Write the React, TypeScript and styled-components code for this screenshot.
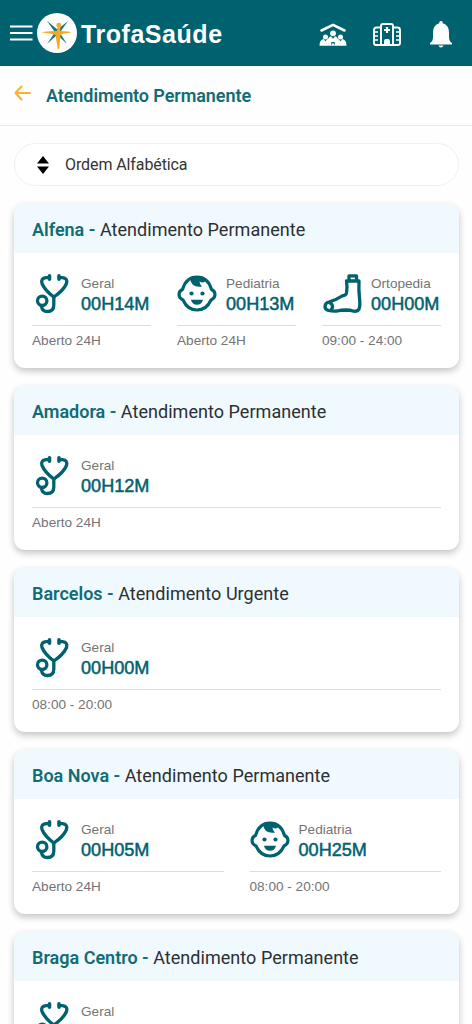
import React from "react";
import styled, { createGlobalStyle } from "styled-components";

const TEAL = "#00616f";

const GlobalStyle = createGlobalStyle`
  * { box-sizing: border-box; }
  body { margin: 0; background: #fefefe; font-family: Roboto, sans-serif; overflow: hidden; }
  svg { display: block; flex: none; }
`;

const Screen = styled.div`
  height: 1024px;
  overflow: hidden;
  background: #fefefe;
`;

const TopBar = styled.header`
  height: 66px;
  padding: 0 19px 0 10px;
  display: flex;
  align-items: center;
  background: ${TEAL};
  color: #fff;
`;

const Brand = styled.div`
  margin-left: 4px;
  display: flex;
  align-items: center;
  gap: 4px;
  font: 700 25px/30px "Liberation Sans", Arial, sans-serif;
  letter-spacing: 0.55px;
`;

const BrandName = styled.span`
  padding-top: 1px;
`;

const Actions = styled.nav`
  margin-left: auto;
  padding-top: 4px;
  display: flex;
  align-items: center;
  gap: 26px;

  svg:last-child {
    margin-left: 2px;
  }
`;

const PageHeader = styled.div`
  height: 60px;
  padding-left: 14px;
  display: flex;
  align-items: center;
  gap: 15px;
  border-bottom: 1px solid #e9e9e9;
`;

const BackArrow = styled.svg`
  margin-bottom: 6px;
`;

const PageTitle = styled.h1`
  margin: 0;
  font-size: 18px;
  line-height: 24px;
  font-weight: 600;
  letter-spacing: -0.08px;
  color: #126c75;
`;

const SortSelect = styled.button`
  width: 445px;
  height: 43px;
  margin: 17px 0 0 14px;
  padding: 0 0 0 22px;
  display: flex;
  align-items: center;
  gap: 16px;
  border: 1px solid #f0f0f0;
  border-radius: 22px;
  background: #fff;
  color: #333;
  font: 400 16px/20px Roboto, sans-serif;
  letter-spacing: -0.1px;
`;

const CardList = styled.main`
  padding: 18px 13px 0 14px;
  display: flex;
  flex-direction: column;
  gap: 18px;
`;

const Card = styled.section`
  height: 164px;
  flex: none;
  border-radius: 11px;
  background: #fff;
  box-shadow: 0 3px 7px rgba(0, 0, 0, 0.24);
`;

const CardHeader = styled.h2`
  margin: 0;
  height: 49px;
  padding: 0 18px;
  border-radius: 11px 11px 0 0;
  background: #f0f9fd;
  font-size: 18px;
  line-height: 51px;
  font-weight: 400;
  letter-spacing: 0.04px;
  color: #2c2f33;
`;

const Unit = styled.span`
  font-weight: 600;
  letter-spacing: 0;
  color: #126c75;
`;

const Services = styled.div`
  padding: 20px 18px 0;
  display: flex;
  gap: 26px;
`;

const ServiceBox = styled.div`
  flex: 1 1 0;
  min-width: 0;
  font-family: "Liberation Sans", Arial, sans-serif;
`;

const ServiceTop = styled.div`
  height: 53px;
  display: flex;
  gap: 9px;
  border-bottom: 1px solid #dedede;
`;

const ServiceName = styled.div`
  margin-top: 3px;
  font-size: 13.6px;
  line-height: 16px;
  color: #747474;
`;

const WaitTime = styled.div`
  margin-top: 2px;
  font-size: 18.1px;
  line-height: 20px;
  color: ${TEAL};
  -webkit-text-stroke: 0.5px ${TEAL};
`;

const Hours = styled.div`
  margin-top: 7px;
  font-size: 13.6px;
  line-height: 16px;
  color: #747474;
`;

function MenuIcon() {
  return (
    <svg width="23" height="18" viewBox="0 0 23 18" stroke="#fff" strokeWidth="2">
      <path d="M0 2.500h22.500M0 9h22.500M0 15.500h22.500" />
    </svg>
  );
}

function Logo() {
  return (
    <svg width="40" height="40" viewBox="0 0 40 40">
      <circle cx="20" cy="20" r="20" fill="#fff" />
      <g fill="#16777c">
        <path d="M10 8 21 17 18.500 20Z" />
        <path d="M31 8 22.500 20 19.500 17.500Z" />
        <path d="M10 31 18.500 18.500 21 21Z" />
        <path d="M30 31 19.500 21 22 18.500Z" />
      </g>
      <g fill="#f7a823">
        <path d="M4 19.300Q15 17.800 20.500 17.800T35 19.300Q25 20.600 23.500 22L22.200 36H20.800L18.500 22Q15 20.600 4 19.300Z" />
        <circle cx="21.800" cy="12.200" r="2.400" />
        <path d="M20 14.500h3.500L23 19h-3Z" />
      </g>
    </svg>
  );
}

function FamilyHomeIcon() {
  return (
    <svg width="28" height="24" viewBox="0 0 28 24" fill="#fff">
      <path d="M2.500 7.500 14 1.800l11.500 5.700" fill="none" stroke="#fff" strokeWidth="2.600" strokeLinecap="round" strokeLinejoin="round" />
      <circle cx="14" cy="10.300" r="2.900" />
      <circle cx="6.500" cy="14" r="2.500" />
      <circle cx="21.500" cy="14" r="2.500" />
      <path d="M8.800 18.500q0-5 3.200-5.300l2 2.600 2-2.600q3.200.3 3.200 5.300l-2.200.5h-6Z" />
      <path d="M.5 22.800q0-6 4.200-6.700l1.800 2.200 1.800-2.200q3 .3 4 3v3.700Z" />
      <path d="M27.500 22.800q0-6-4.200-6.700l-1.800 2.200-1.800-2.200q-3 .3-4 3v3.700Z" />
      <path d="m12 22.800 2-3 2 3Z" />
    </svg>
  );
}

function HospitalIcon() {
  return (
    <svg width="28" height="24" viewBox="0 0 28 24" fill="none" stroke="#fff" strokeWidth="1.900" strokeLinejoin="round">
      <path d="M8 22V3q0-2 2-2h8q2 0 2 2v19" />
      <path d="M8 4.500H3.500Q1 4.500 1 7v13q0 2 2 2h22q2 0 2-2V7q0-2.500-2.500-2.500H20" />
      <path d="M1 9h4M1 13h4M1 17h4M23 9h4M23 13h4M23 17h4" strokeWidth="1.700" />
      <path d="M14 4v6M11 7h6" strokeWidth="2.200" />
      <path d="M12 22v-4q0-1 1-1h2q1 0 1 1v4" fill="#fff" />
    </svg>
  );
}

function BellIcon() {
  return (
    <svg width="24" height="28" viewBox="0 0 24 28" fill="#fff">
      <path d="M12 0q1.800 0 1.800 2.300Q20 4 20 11.500V16q0 4.500 3 6v1.500H1V22q3-1.500 3-6v-4.500Q4 4 10.200 2.300 10.200 0 12 0Z" />
      <path d="M9.500 24.500h5q-.5 2-2.500 2t-2.500-2Z" />
    </svg>
  );
}

function StethoscopeIcon() {
  return (
    <svg width="40" height="42" viewBox="0 0 40 42" fill="none" stroke={TEAL} strokeWidth="3.300" strokeLinecap="round" strokeLinejoin="round">
      <path d="M17.500 2.800v3.400M27 2.800v3.400" strokeWidth="3.600" />
      <path d="M17 4.600H14Q8.500 5.200 10 10.500 13 17.500 21.800 24 31.500 17.500 34.500 10.500 36 5.200 30.500 4.600H27.500" />
      <path d="M21.800 24v8q0 6.500-6.500 6.500-5 0-5.800-5" />
      <circle cx="10.200" cy="27.800" r="4.700" />
    </svg>
  );
}

function BabyIcon() {
  return (
    <svg width="40" height="42" viewBox="0 0 40 42" fill="none">
      <path d="M5.500 16.500Q9 4 20 4t14.500 12.500q3.500 1.500 3.500 5t-4 5.500Q29.500 37 20 37T6 27q-4-2-4-5.500t3.500-5Z" stroke={TEAL} strokeWidth="3.100" strokeLinejoin="round" />
      <path d="M13 5q7-4 14 0l1.500 2.500q-.5 2-3 2-1.500 0-3-1 0 3 2.500 5Q14 15 13 5Z" fill={TEAL} />
      <circle cx="14.500" cy="20.500" r="2.100" fill={TEAL} />
      <circle cx="25.500" cy="20.500" r="2.100" fill={TEAL} />
      <path d="M14 26.700h12q-1.200 5-6 5t-6-5Z" fill={TEAL} />
    </svg>
  );
}

function FootIcon() {
  return (
    <svg width="40" height="42" viewBox="0 0 40 42" fill="none" stroke={TEAL} strokeWidth="3.300" strokeLinejoin="round">
      <path d="M24.500 8H37Q36.600 17 37.400 24T37.500 34.500Q37 38.300 32 38.300 28 37 24 37 19 37.200 15 38 10 38.200 6.500 37.500 3 36.500 3 33.500 3 30 7 29 15 26.500 20 23 24 22.500 24.500 20 25.500 14 24.500 8Z" />
      <path d="M27 8V2.800h7.500V8M7 29.500q3.500 1 3.500 4t-2.500 4" />
    </svg>
  );
}

const ICONS = { Geral: StethoscopeIcon, Pediatria: BabyIcon, Ortopedia: FootIcon };

type Service = { name: keyof typeof ICONS; wait: string; hours: string };
type Hospital = { unit: string; kind: string; services: Service[] };

const HOSPITALS: Hospital[] = [
  {
    unit: "Alfena",
    kind: "Atendimento Permanente",
    services: [
      { name: "Geral", wait: "00H14M", hours: "Aberto 24H" },
      { name: "Pediatria", wait: "00H13M", hours: "Aberto 24H" },
      { name: "Ortopedia", wait: "00H00M", hours: "09:00 - 24:00" },
    ],
  },
  { unit: "Amadora", kind: "Atendimento Permanente", services: [{ name: "Geral", wait: "00H12M", hours: "Aberto 24H" }] },
  { unit: "Barcelos", kind: "Atendimento Urgente", services: [{ name: "Geral", wait: "00H00M", hours: "08:00 - 20:00" }] },
  {
    unit: "Boa Nova",
    kind: "Atendimento Permanente",
    services: [
      { name: "Geral", wait: "00H05M", hours: "Aberto 24H" },
      { name: "Pediatria", wait: "00H25M", hours: "08:00 - 20:00" },
    ],
  },
  { unit: "Braga Centro", kind: "Atendimento Permanente", services: [{ name: "Geral", wait: "", hours: "" }] },
];

function ServiceItem({ name, wait, hours }: Service) {
  const Icon = ICONS[name];
  return (
    <ServiceBox>
      <ServiceTop>
        <Icon />
        <div>
          <ServiceName>{name}</ServiceName>
          <WaitTime>{wait}</WaitTime>
        </div>
      </ServiceTop>
      <Hours>{hours}</Hours>
    </ServiceBox>
  );
}

export default function App() {
  return (
    <Screen>
      <GlobalStyle />
      <TopBar>
        <MenuIcon />
        <Brand>
          <Logo />
          <BrandName>TrofaSaúde</BrandName>
        </Brand>
        <Actions>
          <FamilyHomeIcon />
          <HospitalIcon />
          <BellIcon />
        </Actions>
      </TopBar>
      <PageHeader>
        <BackArrow width="17" height="16" viewBox="0 0 17 16" fill="none" stroke="#fbb02f" strokeWidth="2" strokeLinecap="round" strokeLinejoin="round">
          <path d="M16 8H1.500M7.500 1.500 1.500 8l6 6.500" />
        </BackArrow>
        <PageTitle>Atendimento Permanente</PageTitle>
      </PageHeader>
      <SortSelect>
        <svg width="12" height="18" viewBox="0 0 12 18" fill="#000">
          <path d="M6 0l6 7.500H0ZM6 18l6-7.500H0Z" />
        </svg>
        Ordem Alfabética
      </SortSelect>
      <CardList>
        {HOSPITALS.map((h) => (
          <Card key={h.unit}>
            <CardHeader>
              <Unit>{h.unit} -</Unit> {h.kind}
            </CardHeader>
            <Services>
              {h.services.map((s) => (
                <ServiceItem key={s.name} {...s} />
              ))}
            </Services>
          </Card>
        ))}
      </CardList>
    </Screen>
  );
}
